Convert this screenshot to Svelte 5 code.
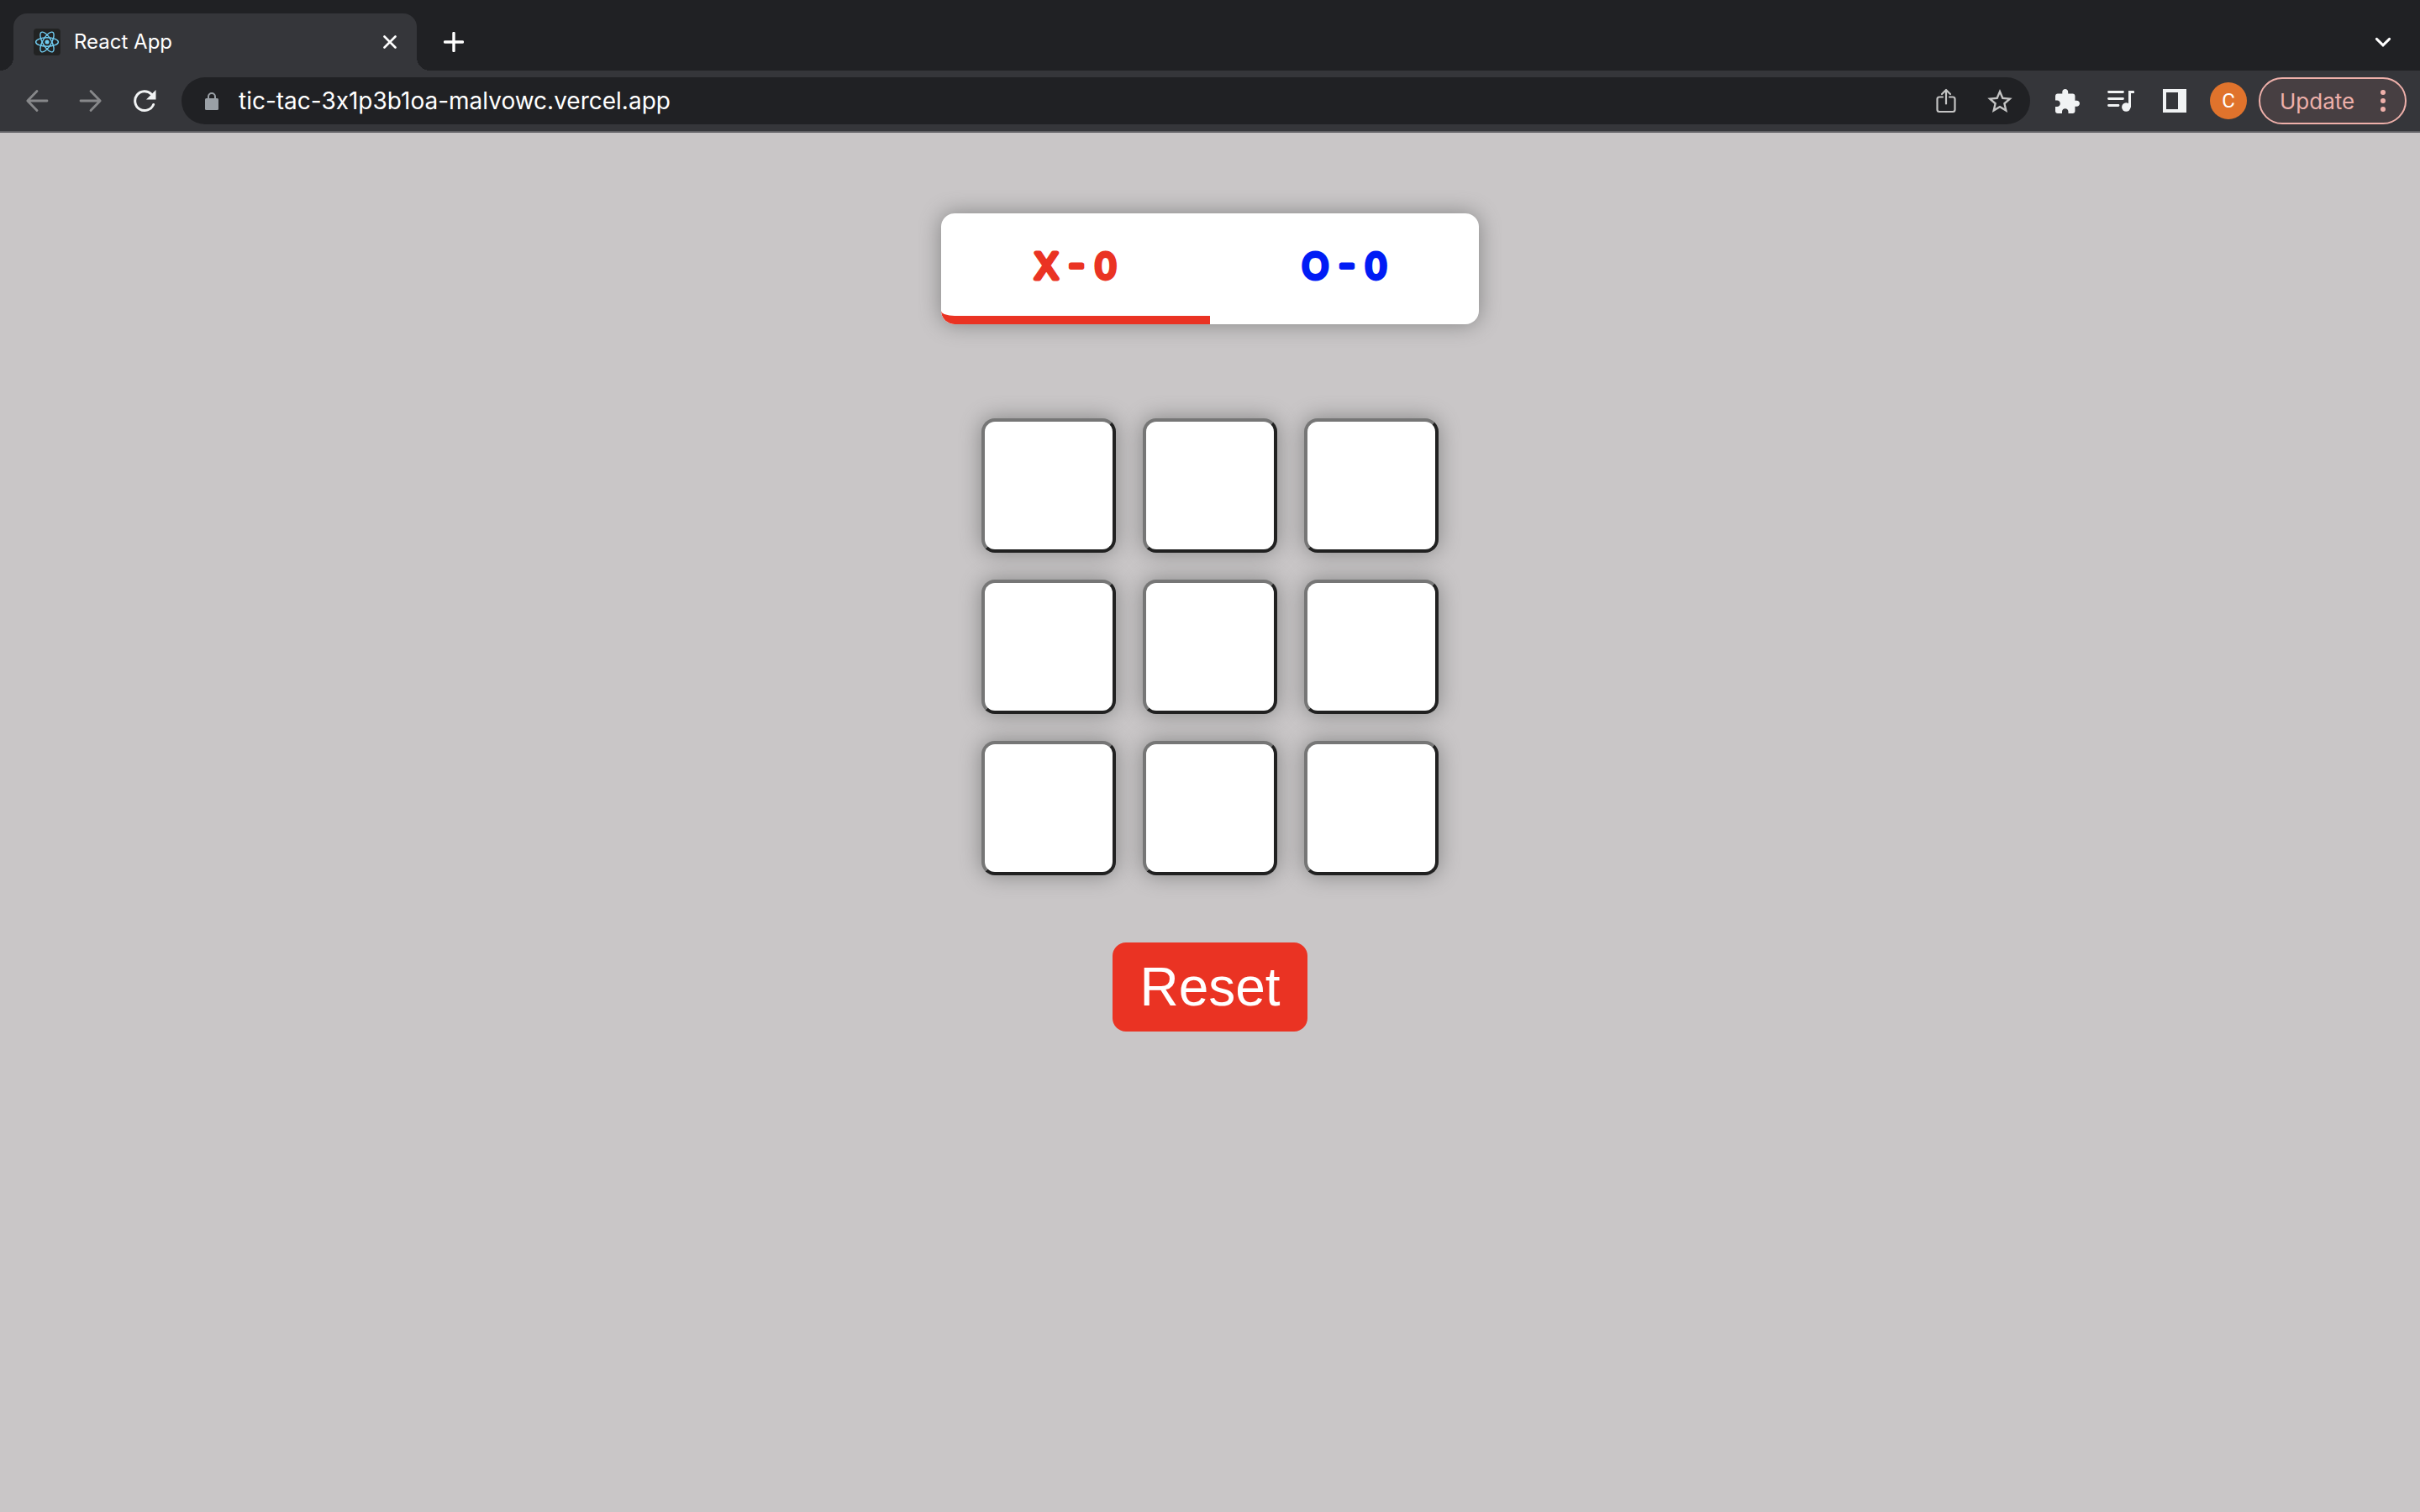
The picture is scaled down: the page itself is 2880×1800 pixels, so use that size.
<script>
  let turn = $state('X');
  let score = $state({ X: 0, O: 0 });
  let cells = $state(Array(9).fill(''));

  function play(i) {
    if (cells[i]) return;
    cells[i] = turn;
    turn = turn === 'X' ? 'O' : 'X';
  }

  function reset() {
    cells = Array(9).fill('');
    turn = 'X';
  }
</script>

<div class="window">
  <header class="tabstrip">
    <div class="tab">
      <svg class="favicon" viewBox="0 0 32 32" aria-hidden="true">
        <rect width="32" height="32" rx="4" fill="#222323" />
        <g fill="none" stroke="#70cdf2" stroke-width="1.4">
          <ellipse cx="16" cy="16" rx="13.4" ry="5.2" />
          <ellipse cx="16" cy="16" rx="13.4" ry="5.2" transform="rotate(60 16 16)" />
          <ellipse cx="16" cy="16" rx="13.4" ry="5.2" transform="rotate(120 16 16)" />
        </g>
        <circle cx="16" cy="16" r="2.5" fill="#70cdf2" />
      </svg>
      <span class="tab-title">React App</span>
      <button class="icon-btn close" aria-label="Close tab">
        <svg viewBox="0 0 16 16" width="16" height="16"><path d="M1.5 1.5l13 13M14.5 1.5l-13 13" stroke="#fff" stroke-width="2.6" stroke-linecap="round" /></svg>
      </button>
    </div>
    <button class="icon-btn new-tab" aria-label="New tab">
      <svg viewBox="0 0 24 24" width="24" height="24"><path d="M12 1.5v21M1.5 12h21" stroke="#fff" stroke-width="3.4" stroke-linecap="round" /></svg>
    </button>
    <button class="icon-btn tab-search" aria-label="Search tabs">
      <svg viewBox="0 0 20 12" width="20" height="12"><path d="M2.4 2.4l7.6 7.4 7.6-7.4" fill="none" stroke="#fff" stroke-width="3" stroke-linecap="round" /></svg>
    </button>
  </header>

  <nav class="toolbar">
    <button class="icon-btn" aria-label="Back">
      <svg viewBox="0 0 28 28" width="28" height="28"><path d="M26 14H3M14 2.500L2.800 14 14 25.500" fill="none" stroke="#87888a" stroke-width="2.800" stroke-linecap="round" stroke-linejoin="round" /></svg>
    </button>
    <button class="icon-btn" aria-label="Forward">
      <svg viewBox="0 0 28 28" width="28" height="28"><path d="M2 14h23M14 2.500L25.200 14 14 25.500" fill="none" stroke="#87888a" stroke-width="2.800" stroke-linecap="round" stroke-linejoin="round" /></svg>
    </button>
    <button class="icon-btn" aria-label="Reload">
      <svg viewBox="0 0 28 28" width="28" height="28"><path d="M24.600 18.500A11.400 11.400 0 1 1 22.300 6.200" fill="none" stroke="#f1f3f4" stroke-width="3" stroke-linecap="round" /><path d="M27.500 1v11.500H16z" fill="#f1f3f4" /></svg>
    </button>
    <div class="omnibox">
      <svg class="lock" viewBox="0 0 16 21" width="16" height="21" aria-hidden="true"><rect y="7" width="16" height="14" rx="1.500" fill="#9aa0a6" /><path d="M4 8V5a4 4 0 0 1 8 0v3" fill="none" stroke="#9aa0a6" stroke-width="2" /></svg>
      <input class="url" type="text" aria-label="Address" value="tic-tac-3x1p3b1oa-malvowc.vercel.app" />
      <button class="icon-btn" aria-label="Share">
        <svg viewBox="0 0 28 30" width="28" height="30"><path d="M10 10.500H6a2.500 2.500 0 0 0-2.500 2.500v12.500A2.500 2.500 0 0 0 6 28h16a2.500 2.500 0 0 0 2.500-2.500V13a2.500 2.500 0 0 0-2.500-2.500h-4M14 18.500V2.500M9 7l5-5 5 5" fill="none" stroke="#c4c4c4" stroke-width="2.200" stroke-linecap="round" stroke-linejoin="round" /></svg>
      </button>
      <button class="icon-btn" aria-label="Bookmark">
        <svg viewBox="2 2 20 19" width="30" height="28"><path fill="#c4c4c4" d="M22 9.240l-7.190-.62L12 2 9.190 8.630 2 9.240l5.460 4.730L5.820 21 12 17.270 18.180 21l-1.630-7.030L22 9.240zM12 15.400l-3.760 2.270 1-4.280-3.320-2.880 4.380-.38L12 6.100l1.710 4.040 4.380.38-3.320 2.880 1 4.280L12 15.400z" /></svg>
      </button>
    </div>
    <button class="icon-btn" aria-label="Extensions">
      <svg viewBox="2 1 21 21" width="29" height="29"><path fill="#f1f3f4" d="M20.500 11H19V7c0-1.100-.9-2-2-2h-4V3.500C13 2.120 11.880 1 10.500 1S8 2.120 8 3.500V5H4c-1.100 0-1.990.9-1.990 2v3.800H3.500c1.490 0 2.700 1.210 2.700 2.700s-1.210 2.700-2.700 2.700H2V20c0 1.100.9 2 2 2h3.800v-1.500c0-1.490 1.210-2.700 2.700-2.700s2.700 1.210 2.700 2.700V22H17c1.100 0 2-.9 2-2v-4h1.500c1.380 0 2.500-1.120 2.500-2.500S21.880 11 20.500 11z" /></svg>
    </button>
    <button class="icon-btn" aria-label="Media controls">
      <svg viewBox="0 0 32 26" width="32" height="26"><g stroke="#f1f3f4" stroke-width="2.800" stroke-linecap="round" fill="none"><path d="M1.500 2.500h17M1.500 10.500h17M1.500 18.500h11.500" /><path d="M26.500 20V2.500h4.200" stroke-width="3" /></g><circle cx="22.300" cy="20.500" r="5.200" fill="#f1f3f4" /></svg>
    </button>
    <button class="icon-btn" aria-label="Side panel">
      <svg viewBox="0 0 28 28" width="28" height="28"><path fill="#f1f3f4" fill-rule="evenodd" d="M0 0h28v28H0zM4 4v20h14V4z" /></svg>
    </button>
    <button class="avatar" aria-label="Profile">C</button>
    <button class="update">
      <span>Update</span>
      <svg viewBox="0 0 6 26" width="6" height="26" aria-hidden="true"><g fill="#eeb0aa"><circle cx="3" cy="3" r="3" /><circle cx="3" cy="13" r="3" /><circle cx="3" cy="23" r="3" /></g></svg>
    </button>
  </nav>

  <main>
    <div class="scoreboard">
      <div class="score x" class:active={turn === 'X'}>
        <svg width="100%" height="64"><text x="50%" y="46">X - {score.X}</text></svg>
      </div>
      <div class="score o" class:active={turn === 'O'}>
        <svg width="100%" height="64"><text x="50%" y="46">O - {score.O}</text></svg>
      </div>
    </div>
    <div class="board">
      {#each cells as cell, i}
        <button class="cell" class:o={cell === 'O'} aria-label={`Cell ${i + 1}`} onclick={() => play(i)}>{cell}</button>
      {/each}
    </div>
    <button class="reset" onclick={reset}>Reset</button>
  </main>
</div>

<style>
  :global(body) {
    margin: 0;
    background: #c9c6c7;
  }
  .window {
    display: flex;
    flex-direction: column;
    min-height: 100vh;
    font-family: Inter, Roboto, sans-serif;
  }
  button {
    font-family: inherit;
    cursor: pointer;
  }
  svg {
    display: block;
    flex: none;
  }
  .icon-btn {
    display: flex;
    align-items: center;
    justify-content: center;
    flex: none;
    width: 32px;
    height: 32px;
    padding: 0;
    border: 0;
    background: none;
  }

  .tabstrip {
    display: flex;
    align-items: center;
    height: 84px;
    padding: 16px 28px 0 16px;
    box-sizing: border-box;
    background: #202124;
  }
  .tab {
    position: relative;
    display: flex;
    align-items: center;
    width: 480px;
    height: 68px;
    padding: 0 16px 0 24px;
    box-sizing: border-box;
    border-radius: 16px 16px 0 0;
    background: #35363a;
  }
  .tab::before,
  .tab::after {
    content: '';
    position: absolute;
    bottom: 0;
    width: 16px;
    height: 16px;
  }
  .tab::before {
    right: 100%;
    background: radial-gradient(circle at 0 0, transparent 16px, #35363a 16px);
  }
  .tab::after {
    left: 100%;
    background: radial-gradient(circle at 100% 0, transparent 16px, #35363a 16px);
  }
  .favicon {
    width: 32px;
    height: 32px;
  }
  .tab-title {
    flex: 1;
    margin-left: 16px;
    color: #fff;
    font-size: 24px;
    line-height: 32px;
  }
  .new-tab {
    margin-left: 28px;
  }
  .tab-search {
    margin-left: auto;
  }

  .toolbar {
    display: flex;
    align-items: center;
    gap: 32px;
    height: 74px;
    padding: 0 16px 0 28px;
    box-sizing: border-box;
    border-bottom: 2px solid #606064;
    background: #35363a;
  }
  .omnibox {
    display: flex;
    align-items: center;
    flex: 1;
    gap: 32px;
    height: 56px;
    margin: 0 -4px;
    padding: 0 20px 0 28px;
    box-sizing: border-box;
    border-radius: 28px;
    background: #202124;
  }
  .url {
    flex: 1;
    min-width: 0;
    margin-left: -8px;
    padding: 0;
    border: 0;
    outline: 0;
    background: none;
    color: #fff;
    font: 28px Inter, Roboto, sans-serif;
    font-feature-settings: 'calt' 0;
  }
  .avatar {
    flex: none;
    width: 44px;
    height: 44px;
    margin-right: -18px;
    margin-left: -6px;
    padding: 0;
    border: 0;
    border-radius: 50%;
    background: #e0732c;
    color: #fff;
    font: 24px Roboto, sans-serif;
  }
  .update {
    display: flex;
    align-items: center;
    justify-content: space-between;
    flex: none;
    width: 176px;
    height: 56px;
    padding: 0 23px;
    box-sizing: border-box;
    border: 2px solid #eeb0aa;
    border-radius: 28px;
    background: #473f42;
    color: #eeb0aa;
    font-size: 26px;
  }

  main {
    display: flex;
    flex-direction: column;
    align-items: center;
    padding: 96px 32px;
  }
  .scoreboard {
    display: flex;
    width: 640px;
    height: 132px;
    overflow: hidden;
    border-radius: 16px;
    background: #fff;
    box-shadow: 0 0 26px #848484;
  }
  .score {
    flex: 1;
    padding-top: 32px;
    box-sizing: border-box;
    border-bottom: 10px solid transparent;
  }
  .score text {
    font-size: 42px;
    text-anchor: middle;
    fill: currentColor;
    stroke: currentColor;
    stroke-width: 5px;
    stroke-linejoin: round;
    stroke-linecap: round;
  }
  .score.x {
    border-bottom-left-radius: 16px;
    color: #ea3323;
  }
  .score.o {
    border-bottom-right-radius: 16px;
    color: #001cf5;
  }
  .score.x.active {
    border-bottom-color: #ea3323;
  }
  .score.o.active {
    border-bottom-color: #001cf5;
  }
  .board {
    display: grid;
    grid-template-columns: repeat(3, 160px);
    grid-auto-rows: 160px;
    gap: 32px;
    margin-top: 112px;
  }
  .cell {
    padding: 0;
    border: 4px solid;
    border-color: #767676 #212121 #212121 #767676;
    border-radius: 16px;
    background: #fff;
    box-shadow: 0 0 26px #848484;
    color: #ea3323;
    font-size: 96px;
    font-weight: 800;
  }
  .cell.o {
    color: #001cf5;
  }
  .reset {
    margin-top: 80px;
    padding: 16px 32px;
    border: 0;
    border-radius: 16px;
    background: #ea3323;
    color: #fff;
    font: 64px/74px 'Liberation Sans', Arial, sans-serif;
  }
</style>
